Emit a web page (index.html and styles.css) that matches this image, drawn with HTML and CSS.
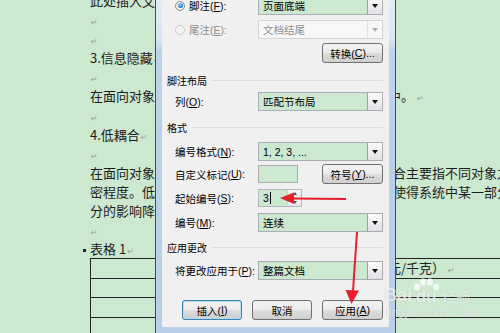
FILE: index.html
```html
<!DOCTYPE html>
<html>
<head>
<meta charset="utf-8">
<title>脚注和尾注</title>
<link rel="stylesheet" href="styles.css">
</head>
<body>
<div class="doc">
  <div class="line"><span class="l">此处插入文字</span></div>
  <div class="line"><span class="l"><span class="pm">↵</span></span></div>
  <div class="line"><span class="l"><span class="pm">↵</span></span></div>
  <div class="line"><span class="l">3.信息隐藏<span class="pm">↵</span></span></div>
  <div class="line"><span class="l"><span class="pm">↵</span></span></div>
  <div class="line"><span class="l">在面向对象的</span><span class="r shift">中。<span class="pm sp">↵</span></span></div>
  <div class="line"><span class="l"><span class="pm">↵</span></span></div>
  <div class="line"><span class="l">4.低耦合<span class="pm">↵</span></span></div>
  <div class="line"><span class="l"><span class="pm">↵</span></span></div>
  <div class="line"><span class="l">在面向对象方</span><span class="r">合主要指不同对象之间相互关联的紧</span></div>
  <div class="line"><span class="l">密程度。低耦</span><span class="r">使得系统中某一部分的变化对其他部</span></div>
  <div class="line"><span class="l">分的影响降低</span></div>
  <div class="line"><span class="l"><span class="pm">↵</span></span></div>
  <div class="line"><span class="l bul">表格 1<span class="pm">↵</span></span></div>
  <div class="tbl">
    <div class="tr"><span class="tc"></span><span class="tc">元/千克）<span class="pm sp2">↵</span></span></div>
    <div class="tr"><span class="tc"></span><span class="tc"></span></div>
    <div class="tr"><span class="tc"></span><span class="tc"></span></div>
    <div class="tr"><span class="tc"></span><span class="tc"></span></div>
  </div>
</div>

<div class="dlg">
  <div class="client">
    <div class="row r1">
      <label class="lab"><span class="radio on"></span>脚注(<u>F</u>):</label>
      <div class="combo"><span>页面底端</span><i class="arr"></i></div>
    </div>
    <div class="row r2">
      <label class="lab dis"><span class="radio off"></span>尾注(<u>E</u>):</label>
      <div class="combo dis"><span>文档结尾</span><i class="arr"></i></div>
    </div>
    <div class="btnrow"><div class="btn">转换(<u>C</u>)...</div></div>

    <div class="group g1"><span>脚注布局</span></div>
    <div class="row r3">
      <label class="lab">列(<u>O</u>):</label>
      <div class="combo"><span>匹配节布局</span><i class="arr"></i></div>
    </div>

    <div class="group g2"><span>格式</span></div>
    <div class="row r4">
      <label class="lab">编号格式(<u>N</u>):</label>
      <div class="combo"><span>1, 2, 3, ...</span><i class="arr"></i></div>
    </div>
    <div class="row r5">
      <label class="lab">自定义标记(<u>U</u>):</label>
      <div class="pair"><div class="inp"></div><div class="btn">符号(<u>Y</u>)...</div></div>
    </div>
    <div class="row r6">
      <label class="lab">起始编号(<u>S</u>):</label>
      <div class="spin"><div class="v">3<span class="caret"></span></div><div class="sb"><i class="up"></i><i class="dn"></i></div></div>
    </div>
    <div class="row r7">
      <label class="lab">编号(<u>M</u>):</label>
      <div class="combo"><span>连续</span><i class="arr"></i></div>
    </div>

    <div class="group g3"><span>应用更改</span></div>
    <div class="row r8">
      <label class="lab">将更改应用于(<u>P</u>):</label>
      <div class="combo"><span>整篇文档</span><i class="arr"></i></div>
    </div>

    <div class="actions">
      <div class="btn def">插入(<u>I</u>)</div>
      <div class="btn">取消</div>
      <div class="btn">应用(<u>A</u>)</div>
    </div>
  </div>
</div>

<svg class="ann" width="500" height="333" viewBox="0 0 500 333">
  <line x1="346" y1="199" x2="291" y2="198.5" stroke="#e5202a" stroke-width="2"/>
  <polygon points="280,198 294,192.5 294,204" fill="#e5202a"/>
  <line x1="357" y1="232" x2="353" y2="291" stroke="#e5202a" stroke-width="2"/>
  <polygon points="351.5,304 345.5,290 359,290.5" fill="#e5202a"/>
</svg>

<div class="wm">
  <div class="wm-top">
    <span class="wm-bai">Bai</span>
    <span class="wm-paw">
      <svg width="26" height="14" viewBox="0 0 26 14">
        <ellipse cx="4" cy="9" rx="3" ry="3.6"/>
        <ellipse cx="10" cy="4" rx="3" ry="3.8"/>
        <ellipse cx="17" cy="4" rx="3" ry="3.8"/>
        <ellipse cx="23" cy="9" rx="3" ry="3.6"/>
      </svg>
      <span class="wm-du">du</span>
    </span>
    <span class="wm-jy">经验</span>
  </div>
  <div class="wm-url">jingyan.baidu.com</div>
</div>
</body>
</html>
```
FILE: styles.css
```css
html, body {
  margin: 0;
  padding: 0;
  width: 500px;
  height: 333px;
  overflow: hidden;
}
body {
  background: #cce8cf;
  font-family: "Noto Sans CJK SC", sans-serif;
}

/* ---------- document ---------- */
.doc {
  margin-top: -9px;
  padding-left: 90px;
  font-size: 13px;
  line-height: 19.1px;
  color: #1c1c1c;
}
.line {
  display: grid;
  grid-template-columns: 303px auto;
  height: 19.1px;
  white-space: nowrap;
}
.l { overflow: hidden; }
.l.bul { overflow: visible; }
.bul::before {
  content: "";
  display: inline-block;
  width: 3px;
  height: 3px;
  background: #222;
  margin-left: -7px;
  margin-right: 4px;
  vertical-align: middle;
}
.r { white-space: nowrap; }
.shift { margin-left: -5px; }
.pm {
  color: #9a9a9a;
  font-family: "DejaVu Sans", sans-serif;
  font-size: 8px;
  margin-left: 1px;
}
.pm.sp { margin-left: 3px; }
.pm.sp2 { margin-left: 3px; }

.tbl {
  border-left: 1px solid #222;
  width: 520px;
}
.tr {
  height: 19.5px;
  box-sizing: border-box;
  border-top: 1px solid #222;
  display: grid;
  grid-template-columns: 297px auto;
  line-height: 18px;
  white-space: nowrap;
}

/* ---------- dialog window ---------- */
.dlg {
  position: absolute;
  left: 155px;
  top: -12px;
  width: 241px;
  box-sizing: border-box;
  border: 1px solid #3e4b59;
  border-top: none;
  padding: 0 6px 6px 6px;
  background: linear-gradient(#e2ecf8 0, #dae6f5 50px, #bcd1ea 64px, #b9cfe9 100%);
}
.client {
  background: #f0f0f0;
  padding: 8px 6px 7px 5px;
  font-family: "Liberation Sans", "Noto Sans CJK SC", sans-serif;
  font-size: 10.5px;
  color: #000;
  display: flex;
  flex-direction: column;
}
.row {
  display: grid;
  grid-template-columns: 83px 125px;
  padding-left: 8px;
  align-items: center;
}
.lab {
  display: flex;
  align-items: center;
  white-space: nowrap;
}
.lab.dis { color: #8d8d8d; }
u { text-decoration: underline; }

.r1 { height: 19px; }
.r2 { height: 19px; margin-top: 5px; }
.btnrow { display: flex; justify-content: flex-end; margin-top: 4px; }
.g1 { margin-top: 10px; }
.r3 { height: 19px; margin-top: 5px; }
.g2 { margin-top: 9px; }
.r4 { height: 19px; margin-top: 8px; }
.r5 { height: 20px; margin-top: 3px; }
.r6 { height: 18px; margin-top: 5px; }
.r7 { height: 19px; margin-top: 6px; }
.g3 { margin-top: 8px; }
.r8 { height: 19px; margin-top: 7px; }
.actions {
  display: flex;
  justify-content: flex-end;
  gap: 10px;
  margin-top: 20px;
}

.group {
  height: 14px;
  display: flex;
  align-items: center;
  gap: 5px;
  font-size: 10px;
  white-space: nowrap;
}
.group::after {
  content: "";
  flex: 1;
  height: 1px;
  background: #d5dfe5;
}

.radio {
  display: inline-block;
  width: 10px;
  height: 10px;
  box-sizing: border-box;
  border-radius: 50%;
  border: 1px solid #8e8f8f;
  background: radial-gradient(circle, #ffffff 0, #e3e3e3 100%);
  margin-right: 4px;
  position: relative;
  flex: none;
}
.radio.on::after {
  content: "";
  position: absolute;
  left: 1.5px;
  top: 1.5px;
  width: 5px;
  height: 5px;
  border-radius: 50%;
  background: radial-gradient(circle at 40% 35%, #9fd6fb 0, #2d7fd0 60%, #144f96 100%);
}
.radio.off {
  border-color: #cacaca;
  background: #f4f4f4;
}

.combo {
  height: 19px;
  box-sizing: border-box;
  border: 1px solid #a8aeb6;
  background: #cce8cf;
  display: flex;
  align-items: center;
  justify-content: space-between;
  padding-left: 4px;
  white-space: nowrap;
}
.combo .arr {
  width: 15px;
  height: 17px;
  box-sizing: border-box;
  border-left: 1px solid #a0a0a0;
  background: linear-gradient(#fbfbfb, #e1e1e1);
  display: flex;
  align-items: center;
  justify-content: center;
}
.combo .arr::after {
  content: "";
  border-left: 3px solid transparent;
  border-right: 3px solid transparent;
  border-top: 4px solid #111;
}
.combo.dis {
  background: #f7f7f7;
  border-color: #d2d2d2;
  color: #8d8d8d;
}
.combo.dis .arr {
  background: #f7f7f7;
  border-left-color: #e2e2e2;
}
.combo.dis .arr::after { border-top-color: #b0b0b0; }

.btn {
  width: 61px;
  height: 20px;
  box-sizing: border-box;
  border: 1px solid #707070;
  border-radius: 3px;
  background: linear-gradient(#f3f3f3 0%, #ebebeb 49%, #dddddd 50%, #cfcfcf 100%);
  display: flex;
  align-items: center;
  justify-content: center;
  white-space: nowrap;
}
.actions .btn:not(:last-child) { width: 60px; }
.btn.def {
  border-color: #3c7fb1;
  box-shadow: inset 0 0 0 1px #b3dcf5;
}

.pair {
  display: flex;
  justify-content: space-between;
  align-items: center;
}
.inp {
  width: 40px;
  height: 18px;
  box-sizing: border-box;
  border: 1px solid #abadb3;
  background: #cce8cf;
}

.spin {
  width: 44px;
  height: 18px;
  box-sizing: border-box;
  border: 1px solid #b4b8be;
  display: flex;
}
.spin .v {
  flex: 1;
  background: #cce8cf;
  padding-left: 4px;
  display: flex;
  align-items: center;
}
.caret {
  width: 1px;
  height: 12px;
  background: #000;
  margin-left: 1px;
}
.spin .sb {
  width: 13px;
  display: flex;
  flex-direction: column;
  border-left: 1px solid #cfcfcf;
}
.spin .sb i {
  flex: 1;
  display: flex;
  align-items: center;
  justify-content: center;
  background: linear-gradient(#f8f8f8, #e7e7e7);
}
.spin .sb i.up { border-bottom: 1px solid #d8d8d8; }
.spin .sb i.up::after {
  content: "";
  border-left: 2px solid transparent;
  border-right: 2px solid transparent;
  border-bottom: 3px solid #555;
}
.spin .sb i.dn::after {
  content: "";
  border-left: 2px solid transparent;
  border-right: 2px solid transparent;
  border-top: 3px solid #555;
}

/* ---------- annotations ---------- */
.ann {
  position: absolute;
  left: 0;
  top: 0;
  pointer-events: none;
}

.wm {
  position: absolute;
  left: 384px;
  top: 279px;
  color: rgba(255, 255, 255, 0.72);
  font-family: "Liberation Sans", sans-serif;
  text-shadow: 0 0 1px rgba(0, 0, 0, 0.18);
}
.wm-top {
  display: flex;
  align-items: flex-end;
  height: 25px;
}
.wm-bai {
  font-size: 18px;
  font-weight: bold;
  line-height: 18px;
}
.wm-paw {
  display: flex;
  flex-direction: column;
  align-items: center;
  margin-left: 1px;
}
.wm-paw svg { fill: rgba(255, 255, 255, 0.72); }
.wm-du {
  font-size: 17px;
  font-weight: bold;
  line-height: 14px;
  margin-top: -2px;
}
.wm-jy {
  font-family: "Noto Sans CJK SC", sans-serif;
  font-size: 14px;
  line-height: 16px;
  margin-left: 3px;
}
.wm-url {
  font-size: 11px;
  margin-top: 2px;
  margin-left: 2px;
  letter-spacing: 0.3px;
}
```
